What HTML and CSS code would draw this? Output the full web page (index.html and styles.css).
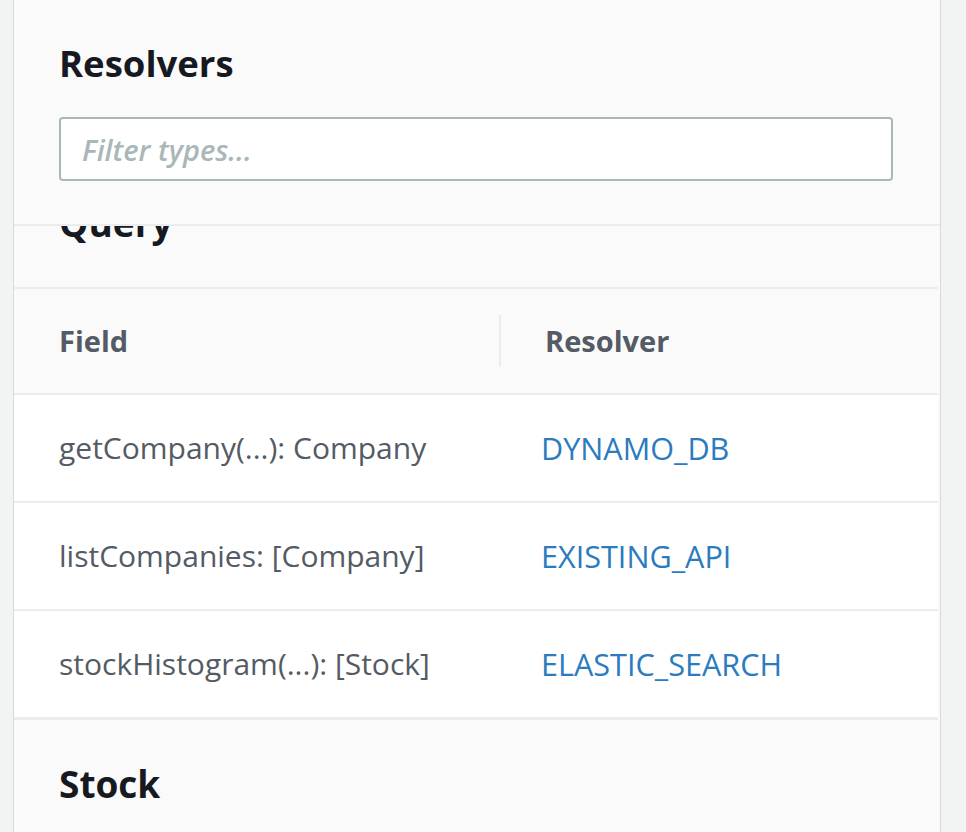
FILE: index.html
```html
<!DOCTYPE html>
<html lang="en">
<head>
<meta charset="utf-8">
<title>Resolvers</title>
<link rel="stylesheet" href="styles.css">
</head>
<body>
<div class="panel">
  <div class="panel-head">
    <h2 class="title">Resolvers</h2>
    <input class="filter" type="text" placeholder="Filter types...">
  </div>
  <div class="scroll">
    <div class="scroll-inner">
      <section class="type">
        <div class="type-head"><h3 class="type-title">Query</h3></div>
        <div class="table">
          <div class="thead">
            <div class="cell c1">Field</div>
            <div class="cell c2">Resolver</div>
          </div>
          <div class="row">
            <div class="cell c1">getCompany(...): Company</div>
            <div class="cell c2"><a class="link" href="#">DYNAMO_DB</a></div>
          </div>
          <div class="row">
            <div class="cell c1">listCompanies: [Company]</div>
            <div class="cell c2"><a class="link" href="#">EXISTING_API</a></div>
          </div>
          <div class="row last">
            <div class="cell c1">stockHistogram(...): [Stock]</div>
            <div class="cell c2"><a class="link" href="#">ELASTIC_SEARCH</a></div>
          </div>
        </div>
      </section>
      <section class="type">
        <div class="type-head"><h3 class="type-title">Stock</h3></div>
      </section>
    </div>
  </div>
</div>
</body>
</html>
```
FILE: styles.css
```css
html, body {
  margin: 0;
  padding: 0;
}
body {
  background: #f2f3f3;
  font-family: "Open Sans", "Noto Sans", sans-serif;
  height: 832px;
  overflow: hidden;
}
.panel {
  box-sizing: border-box;
  margin-left: 13px;
  width: 928px;
  height: 832px;
  background: #fafafa;
  border-left: 1px solid #d5dbdb;
  border-right: 1px solid #d5dbdb;
  display: flex;
  flex-direction: column;
  overflow: hidden;
}
.panel-head {
  padding: 43px 45px 43px 45px;
  border-bottom: 2px solid #eaeded;
}
.title {
  margin: 0;
  font-size: 36.5px;
  line-height: 40px;
  font-weight: 700;
  color: #16191f;
}
.filter {
  display: block;
  box-sizing: border-box;
  margin-top: 34px;
  width: 834px;
  height: 64px;
  border: 2px solid #aab7b8;
  border-radius: 4px;
  background: #fff;
  padding: 0 21px;
  font-family: inherit;
  font-size: 29px;
  font-weight: 600;
  font-style: italic;
  color: #16191f;
  outline: none;
}
.filter::placeholder {
  color: #aab7b8;
  font-style: italic;
}
.scroll {
  flex: 1;
  overflow: hidden;
}
.scroll-inner {
  margin-top: -67px;
  margin-right: 2px;
}
.type-head {
  padding: 44px 45px;
  border-bottom: 2px solid #eaeded;
}
.type-title {
  margin: 0;
  font-size: 37px;
  line-height: 40px;
  font-weight: 700;
  color: #16191f;
}
.thead, .row {
  display: grid;
  grid-template-columns: 485px 1fr;
  align-items: center;
}
.thead {
  height: 104px;
  background: #fafafa;
  border-bottom: 2px solid #eaeded;
}
.row {
  height: 106px;
  background: #fff;
  border-bottom: 2px solid #eaeded;
}
.row.last {
  border-bottom: 3px solid #eaeded;
}
.cell {
  font-size: 30px;
  line-height: 36px;
  color: #545b64;
  white-space: nowrap;
}
.c1 {
  padding-left: 45px;
}
.c2 {
  padding-left: 42px;
}
.thead .cell {
  font-size: 29px;
  font-weight: 700;
}
.thead .c2 {
  border-left: 2px solid #eaeded;
  padding-left: 44px;
  line-height: 52px;
}
.link {
  font-size: 30.6px;
  color: #2b7bbe;
  text-decoration: none;
}
```
